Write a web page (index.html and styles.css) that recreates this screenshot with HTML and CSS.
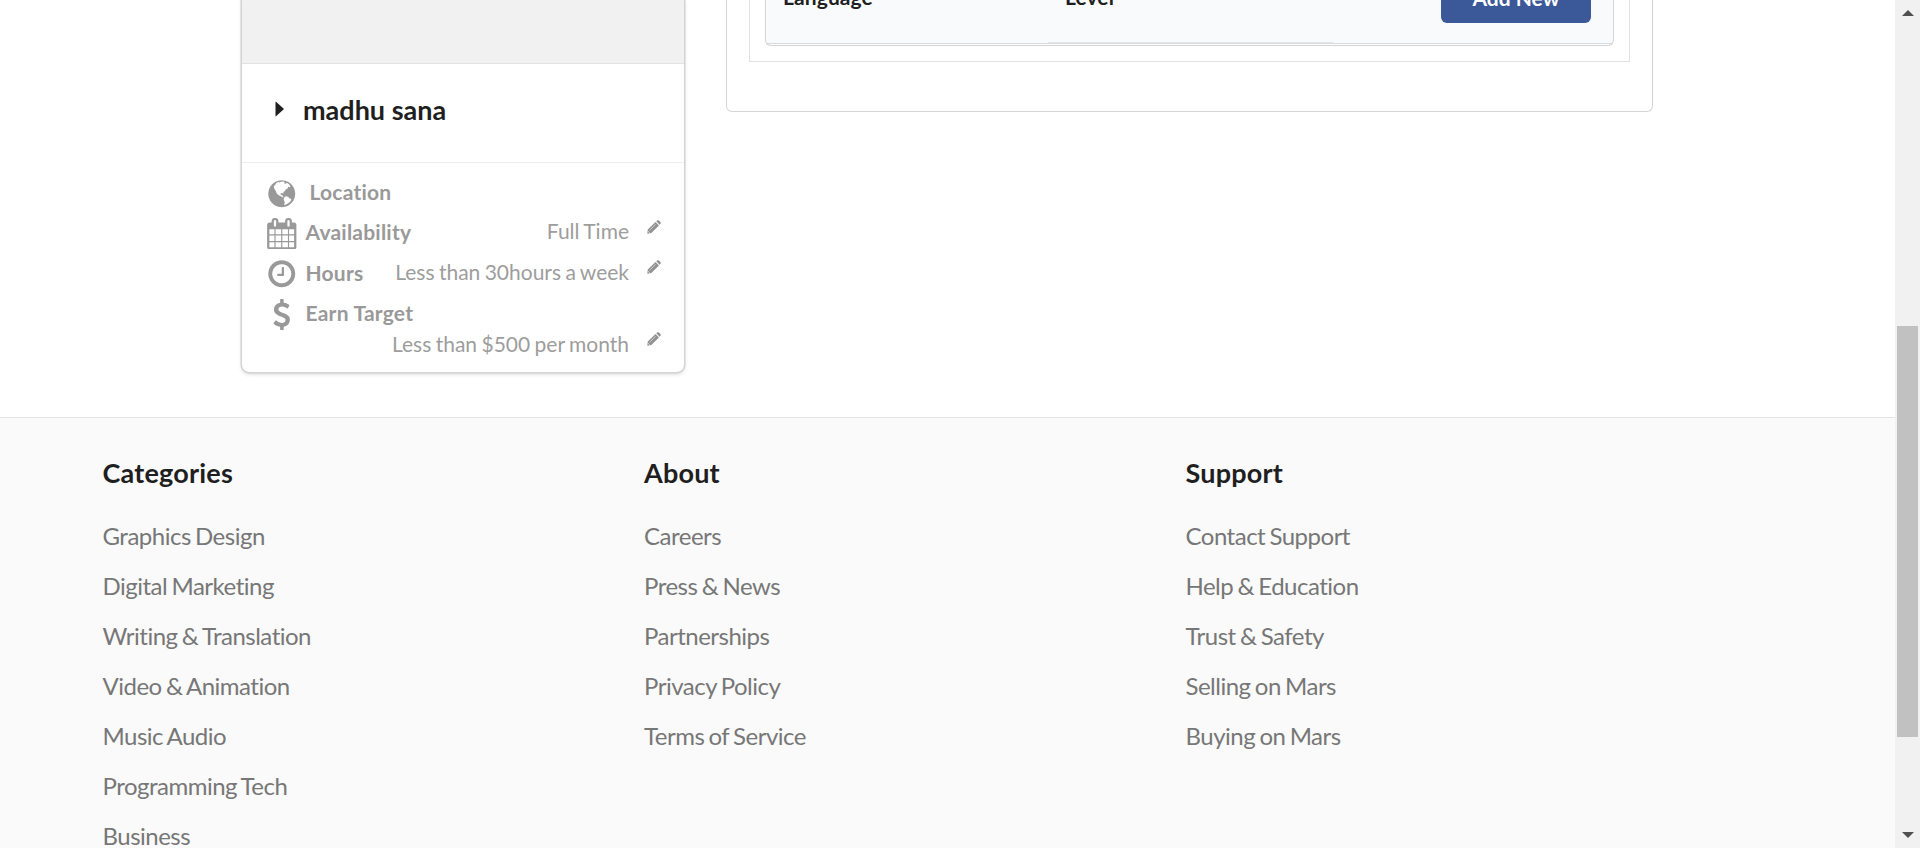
FILE: index.html
```html
<!DOCTYPE html>
<html lang="en">
<head>
<meta charset="utf-8">
<title>Profile</title>
<link rel="stylesheet" href="styles.css">
</head>
<body>
<div class="page">
  <main class="profile">
    <aside class="card">
      <div class="photo"></div>
      <div class="name">
        <svg class="caret" viewBox="0 0 9 16"><path d="M0.5 1v14q0 .6.5.2L8.500 8.400q.5-.4 0-.8L1 .8Q.5.4.5 1z"/></svg>
        <span>madhu sana</span>
      </div>
      <ul class="details">
        <li class="row location">
          <svg class="icon" viewBox="0 0 1792 1792"><path d="M896 128q209 0 385.500 103t279.500 279.500 103 385.500-103 385.500-279.500 279.500-385.500 103-385.500-103-279.500-279.500-103-385.500 103-385.500 279.500-279.500 385.500-103z"/><path class="land" d="M600 270L720 230 780 260 860 210 1010 200 1070 250 1010 290 1090 330 1200 290 1290 340 1400 470 1350 520 1260 500 1240 590 1120 650 1080 740 980 810 1000 880 900 850 820 890 850 960 930 960 950 1040 1010 1080 960 1110 840 1040 700 970 600 870 560 740 480 620 440 480 510 400zM1040 1090L1130 1040 1260 1070 1330 1150 1440 1190 1400 1320 1260 1440 1080 1540 1030 1520 1070 1380 1000 1220z"/></svg>
          <b class="label">Location</b>
        </li>
        <li class="row">
          <svg class="icon" viewBox="0 0 1792 1792"><path d="M192 1664h288v-288h-288v288zm352 0h320v-288h-320v288zm-352-352h288v-320h-288v320zm352 0h320v-320h-320v320zm-352-384h288v-288h-288v288zm736 736h320v-288h-320v288zm-384-736h320v-288h-320v288zm768 736h288v-288h-288v288zm-384-352h320v-320h-320v320zm-352-864v-288q0-13-9.500-22.500t-22.500-9.500h-64q-13 0-22.500 9.500t-9.500 22.500v288q0 13 9.500 22.500t22.500 9.500h64q13 0 22.500-9.500t9.500-22.500zm736 864h288v-320h-288v320zm-384-384h320v-288h-320v288zm384 0h288v-288h-288v288zm32-480v-288q0-13-9.500-22.500t-22.500-9.500h-64q-13 0-22.500 9.500t-9.500 22.500v288q0 13 9.500 22.500t22.500 9.500h64q13 0 22.500-9.500t9.500-22.500zm384-64v1280q0 52-38 90t-90 38h-1408q-52 0-90-38t-38-90v-1280q0-52 38-90t90-38h128v-96q0-66 47-113t113-47h64q66 0 113 47t47 113v96h384v-96q0-66 47-113t113-47h64q66 0 113 47t47 113v96h128q52 0 90 38t38 90z"/></svg>
          <b class="label">Availability</b>
          <span class="value">Full Time</span>
          <svg class="pencil" viewBox="0 0 14 14"><use href="#pencil"/></svg>
        </li>
        <li class="row">
          <svg class="icon" viewBox="0 0 1792 1792"><path d="M1024 544v448q0 14-9 23t-23 9h-320q-14 0-23-9t-9-23v-64q0-14 9-23t23-9h224v-352q0-14 9-23t23-9h64q14 0 23 9t9 23zm416 352q0-148-73-273t-198-198-273-73-273 73-198 198-73 273 73 273 198 198 273 73 273-73 198-198 73-273zm224 0q0 209-103 385.500t-279.500 279.500-385.500 103-385.500-103-279.500-279.500-103-385.500 103-385.500 279.500-279.500 385.500-103 385.500 103 279.500 279.500 103 385.500z"/></svg>
          <b class="label">Hours</b>
          <span class="value">Less than 30hours a week</span>
          <svg class="pencil" viewBox="0 0 14 14"><use href="#pencil"/></svg>
        </li>
        <li class="row">
          <svg class="icon" viewBox="0 0 1792 1792"><path d="M1362 1185q0 153-99.500 263.500t-258.500 136.500v175q0 14-9 23t-23 9h-135q-13 0-22.500-9.500t-9.500-22.500v-175q-66-9-127.500-31t-101.500-44.500-74-48-46.500-37.500-17.500-18q-17-21-2-41l103-135q7-10 23-12 15-2 24 9l2 2q113 99 243 125 37 8 74 8 81 0 142.500-43t61.500-122q0-28-15-53t-33.500-42-58.500-37.500-66-32-80-32.500q-39-16-61.500-25t-61.500-26.500-62.500-31-56.500-35.500-53.500-42.500-43.500-49-35.500-58-21-66.500-8.500-78q0-138 98-242t255-134v-180q0-13 9.500-22.500t22.500-9.500h135q14 0 23 9t9 23v176q57 6 110.500 23t87 33.500 63.500 37.500 39 29 15 14q17 18 5 38l-81 146q-8 15-23 16-14 3-27-7-3-3-14.500-12t-39-26.500-58.500-32-74.500-26-85.500-11.500q-95 0-155 43t-60 111q0 26 8.500 48t29.500 41.500 39.500 33 56 31 60.500 27 70 27.500q53 20 81 31.500t76 35 75.500 42.500 62 50 53 63.500 31.500 76.500 13 94z"/></svg>
          <b class="label">Earn Target</b>
        </li>
        <li class="row target">
          <span class="value">Less than $500 per month</span>
          <svg class="pencil" viewBox="0 0 14 14"><g id="pencil"><path d="M.3 13.700L.8 9.600 8.500 1.900 12 5.400 4.300 13.100zM9.200 1.300L10.100.5q.9-.6 1.800.1L13.400 2.100q.7.900 0 1.800L12.600 4.700z"/><path class="shine" d="M2.700 10.200L8.600 4.300M1 11.100L2.800 12.900"/></g></svg>
        </li>
      </ul>
    </aside>
    <section class="panel">
      <div class="tab">
        <div class="table">
          <b class="language">Language</b>
          <b class="level">Level</b>
          <button class="add">Add New</button>
        </div>
      </div>
    </section>
  </main>
  <footer class="footer">
    <div class="column">
      <h3>Categories</h3>
      <a>Graphics Design</a><a>Digital Marketing</a><a>Writing &amp; Translation</a><a>Video &amp; Animation</a><a>Music Audio</a><a>Programming Tech</a><a>Business</a>
    </div>
    <div class="column">
      <h3>About</h3>
      <a>Careers</a><a>Press &amp; News</a><a>Partnerships</a><a>Privacy Policy</a><a>Terms of Service</a>
    </div>
    <div class="column">
      <h3>Support</h3>
      <a>Contact Support</a><a>Help &amp; Education</a><a>Trust &amp; Safety</a><a>Selling on Mars</a><a>Buying on Mars</a>
    </div>
  </footer>
</div>
<div class="scrollbar">
  <svg class="arrow" viewBox="0 0 12 6"><path d="M0 6L6 0l6 6z"/></svg>
  <div class="thumb"></div>
  <svg class="arrow down" viewBox="0 0 12 6"><path d="M0 0l6 6 6-6z"/></svg>
</div>
</body>
</html>
```
FILE: styles.css
```css
* { box-sizing: border-box; }
body {
  margin: 0;
  height: 848px;
  display: flex;
  overflow: hidden;
  background: #fff;
  font-family: Lato, "Liberation Sans", sans-serif;
  font-size: 21px;
  font-variant-ligatures: none;
  color: #1f1f1f;
}
.page { flex: 1; height: 848px; overflow: hidden; }
.profile { height: 417px; display: flex; align-items: flex-start; gap: 42px; padding-left: 242px; }
.card {
  width: 442px;
  height: 372px;
  border-radius: 0 0 7px 7px;
  box-shadow: 0 0 0 1.5px #d4d4d5, 0 1.5px 4.5px 0 #d4d4d5;
}
.photo { height: 64px; background: #f1f1f1; border-bottom: 1px solid #e2e2e2; }
.name {
  height: 99px;
  display: flex;
  padding: 29px 0 0 33px;
  gap: 19px;
  border-bottom: 1px solid #eee;
  font-size: 27px;
  font-weight: 700;
  line-height: 34px;
}
.caret { width: 9px; height: 16px; margin-top: 8px; fill: #1f1f1f; }
.details { list-style: none; margin: 0; padding: 13px 23px 0 24px; color: #999; }
.row { display: flex; height: 40.5px; line-height: 30px; }
.icon { width: 31.5px; height: 31.5px; margin: 1px 8px 0 0; flex: none; fill: #999; }
.location .icon { margin: 1.5px 12px 0 0; }
.land { fill: #fff; }
.label { flex: 1; padding-top: .5px; font-weight: 700; letter-spacing: .22px; }
.value { margin: -.5px 0 0 auto; text-align: right; letter-spacing: 0; word-spacing: -1px; white-space: nowrap; color: #9d9d9d; }
.pencil { width: 14px; height: 14px; margin: 3px 0 0 18px; fill: #929292; }
.shine { fill: none; stroke: #ddd; stroke-width: .8; }
.target { margin-top: -9px; height: 34px; }
.panel {
  width: 927px;
  height: 112px;
  padding: 0 22px;
  border: 1px solid #d4d4d5;
  border-top: 0;
  border-radius: 0 0 6px 6px;
}
.tab { height: 62px; padding: 0 15px; border: 1px solid #e0e1e2; border-top: 0; }
.table {
  height: 46px;
  display: grid;
  grid-template-columns: 282px 376px 150px;
  padding-left: 17px;
  background:
    linear-gradient(#e4e7e7, #e4e7e7) 282px 42px / 285px 1px no-repeat,
    linear-gradient(#d9dcdc, #d9dcdc) 0 43px / 100% 1px no-repeat,
    linear-gradient(#fff, #fff) 0 44px / 100% 1px no-repeat,
    #f9fafb;
  border: 1px solid #d4d4d5;
  border-top: 0;
  border-radius: 0 0 6px 6px;
}
.language, .level { line-height: 26px; margin-top: -16px; letter-spacing: .1px; }
.add {
  height: 54px;
  margin-top: -31px;
  padding: 2px 0 0;
  border: 0;
  border-radius: 6px;
  background: #3b5998;
  color: #fff;
  font: 700 21px Lato, sans-serif;
}
.footer {
  height: 431px;
  display: grid;
  grid-template-columns: repeat(3, 541.5px);
  padding-left: 102.5px;
  background: #fafafa;
  border-top: 1px solid #e4e4e4;
}
.column { display: flex; flex-direction: column; }
.column h3 { margin: 35px 0 18px; font-size: 27px; line-height: 40px; letter-spacing: .2px; }
.column a { height: 50px; line-height: 50px; font-size: 24px; letter-spacing: -.5px; word-spacing: -1.4px; color: #777; }
.scrollbar {
  width: 25px;
  height: 848px;
  display: flex;
  flex-direction: column;
  align-items: center;
  padding: 10px 0;
  background: #f1f1f1;
}
.arrow { width: 12px; height: 6px; fill: #505050; }
.thumb { width: 21px; height: 411px; margin-top: 310px; background: #c1c1c1; }
.down { margin-top: auto; }
```
